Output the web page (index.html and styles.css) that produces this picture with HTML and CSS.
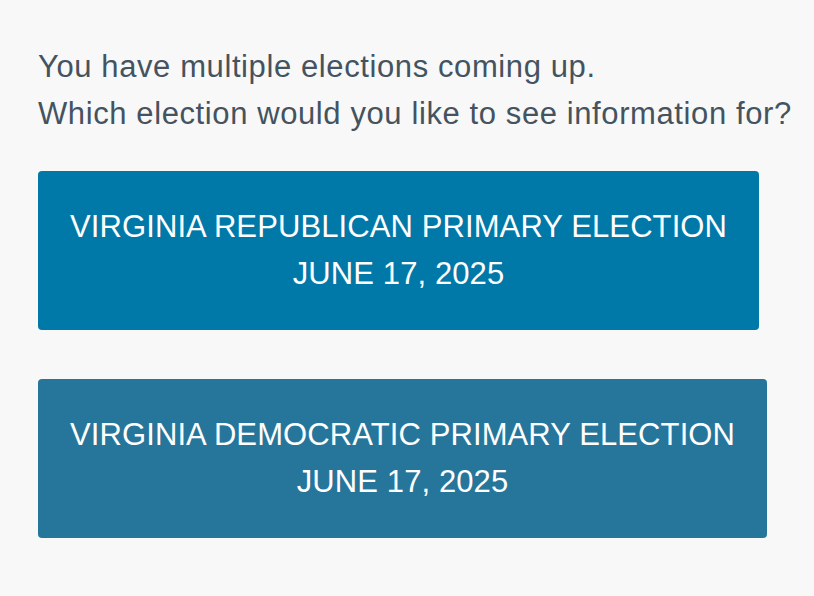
FILE: index.html
```html
<!DOCTYPE html>
<html lang="en">
<head>
<meta charset="utf-8">
<link rel="stylesheet" href="styles.css">
</head>
<body>
<main class="page">
  <p class="intro">You have multiple elections coming up.<br>Which election would you like to see information for?</p>
  <div class="choices">
    <button class="choice choice-rep">VIRGINIA REPUBLICAN PRIMARY ELECTION<br>JUNE 17, 2025</button>
    <button class="choice choice-dem">VIRGINIA DEMOCRATIC PRIMARY ELECTION<br>JUNE 17, 2025</button>
  </div>
</main>
</body>
</html>
```
FILE: styles.css
```css
html, body {
  margin: 0;
  padding: 0;
  background: #f8f8f8;
}
body {
  font-family: "Liberation Sans", Arial, Helvetica, sans-serif;
  color: #44535f;
}
.page {
  padding: 43px 0 43px 38px;
}
.intro {
  margin: 0;
  font-size: 31px;
  line-height: 47px;
  letter-spacing: 0.6px;
  white-space: nowrap;
}
.choices {
  display: flex;
  flex-direction: column;
  align-items: flex-start;
  gap: 49px;
  margin-top: 34px;
}
.choice {
  font-family: inherit;
  font-size: 31px;
  line-height: 47px;
  letter-spacing: 0.1px;
  white-space: nowrap;
  color: #ffffff;
  border: none;
  border-radius: 4px;
  padding: 32px 32px 33px;
  text-align: center;
  cursor: pointer;
}
.choice-rep {
  background: #0079a9;
}
.choice-dem {
  background: #26769b;
}
```
